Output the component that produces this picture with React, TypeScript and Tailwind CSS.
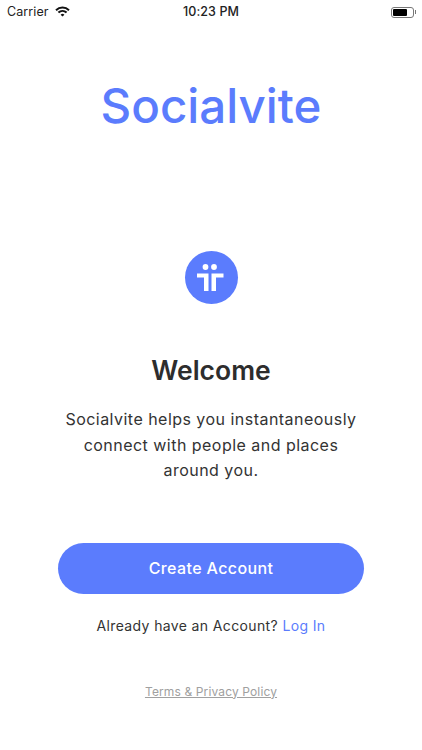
const font = { fontFamily: "Inter, sans-serif" };

function WifiGlyph() {
  return (
    <svg width="15" height="11" viewBox="0 0 15 11" fill="none" stroke="#111" strokeWidth="2">
      <path d="M1 4.2a9.4 9.4 0 0 1 13 0" />
      <path d="M3.4 6.6a6 6 0 0 1 8.2 0" />
      <path d="M7.5 10.6 5.6 8.7a2.8 2.8 0 0 1 3.8 0z" fill="#111" stroke="none" />
    </svg>
  );
}

function StatusBar() {
  return (
    <div className="relative flex h-[24px] items-center justify-between pl-[7px] pr-[6px] text-[12.5px] tracking-[0.1px] text-[#222]">
      <div className="flex items-center gap-[6px]">
        <span>Carrier</span>
        <div className="-mt-[1px]">
          <WifiGlyph />
        </div>
      </div>
      <span className="absolute left-0 right-0 text-center font-medium">10:23 PM</span>
      <div className="flex items-center">
        <div className="h-[11px] w-[23px] rounded-[3px] border border-[#777] p-[1px]">
          <div className="h-full w-[14px] rounded-[1px] bg-black" />
        </div>
        <div className="ml-[1px] h-[4px] w-[1px] bg-[#777]" />
      </div>
    </div>
  );
}

function LogoMark() {
  return (
    <div className="flex h-[53px] w-[53px] items-center justify-center rounded-full bg-[#5b7cfd]">
      <svg width="27" height="28" viewBox="0 0 27 28" fill="white" className="-ml-[2px]">
        <circle cx="8.5" cy="3" r="2.9" />
        <circle cx="17" cy="3" r="2.9" />
        <path d="M0 9.5h11.5V27H7V13.5H0z" />
        <path d="M14.5 9.5h12v4H19V27h-4.5z" />
      </svg>
    </div>
  );
}

export default function App() {
  return (
    <div className="flex h-[750px] w-[422px] flex-col bg-white" style={font}>
      <StatusBar />
      <div className="flex flex-col items-center">
        <h1 className="mt-[47px] text-[47.5px] font-medium leading-[70px] text-[#5b7cfd]">Socialvite</h1>
        <div className="mt-[110px]">
          <LogoMark />
        </div>
        <h2 className="mt-[50px] text-[26.5px] font-semibold leading-[32px] text-[#2d2d2d]">Welcome</h2>
        <p className="mt-[21px] w-[310px] text-center text-[16px] leading-[25.5px] tracking-[0.47px] text-[#333]">
          Socialvite helps you instantaneously connect with people and places around you.
        </p>
        <button className="mt-[59px] flex h-[51px] w-[306px] items-center justify-center rounded-full bg-[#5b7cfd] text-[16px] font-medium tracking-[0.39px] text-white">
          Create Account
        </button>
        <p className="mt-[21px] text-[14px] leading-[22px] tracking-[0.37px] text-[#333]">
          Already have an Account? <span className="text-[#5b7cfd]">Log In</span>
        </p>
        <a className="mt-[45px] text-[12px] leading-[20px] tracking-[0.13px] text-[#a0a0a0] underline">Terms &amp; Privacy Policy</a>
      </div>
    </div>
  );
}
